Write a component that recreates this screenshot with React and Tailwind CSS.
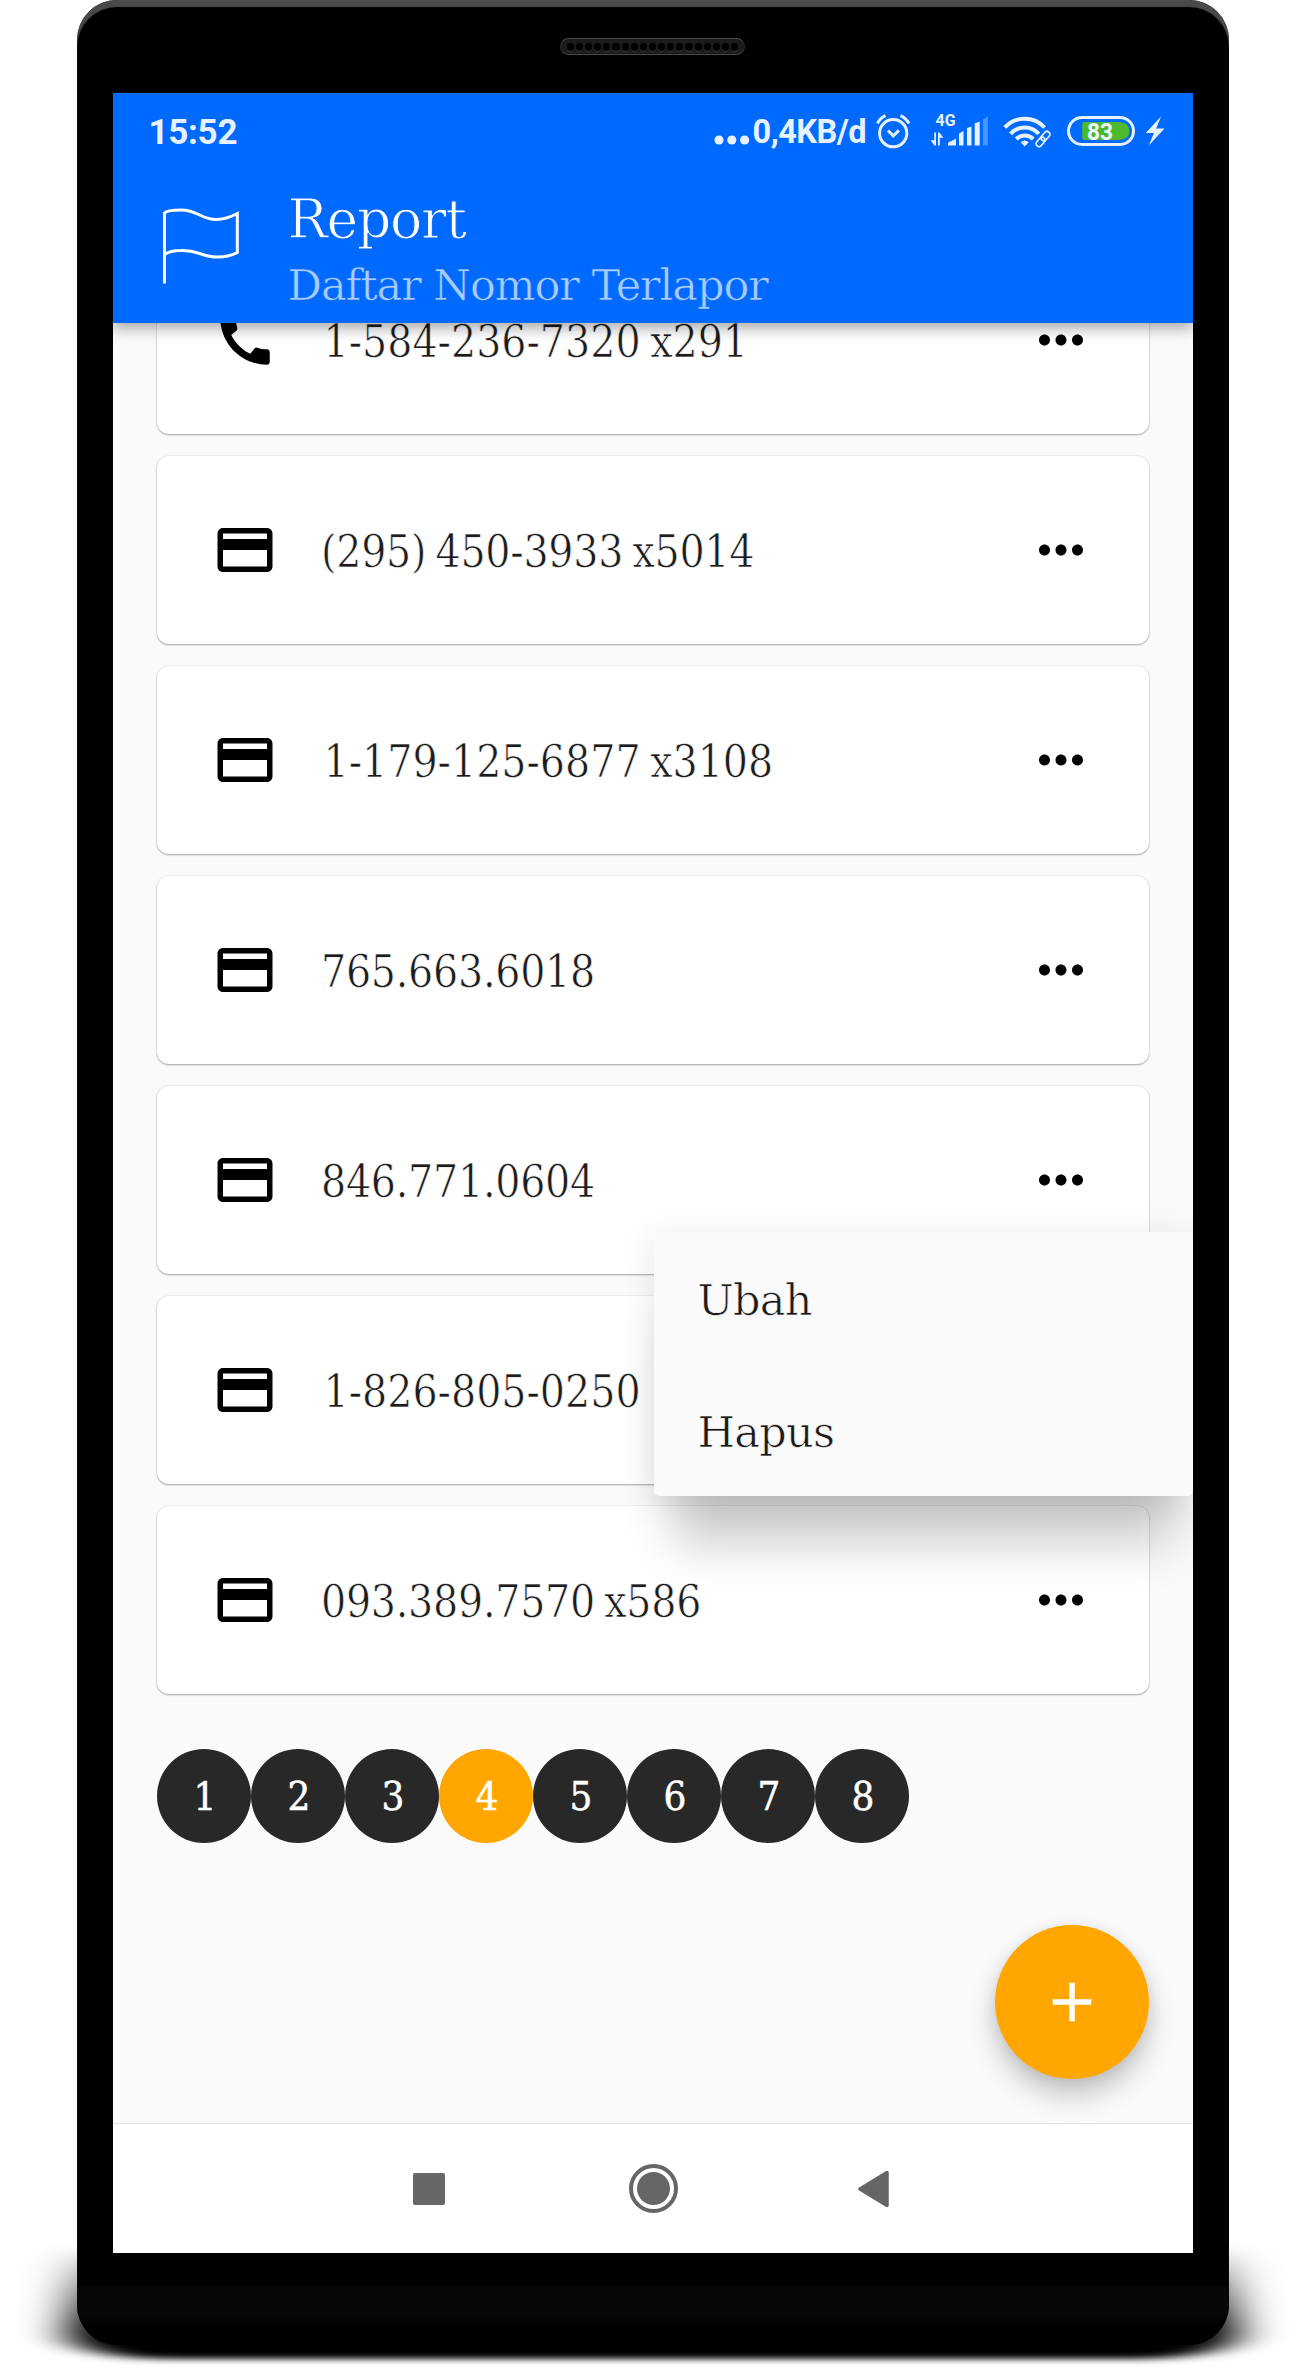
import React from "react";
import { MdAdd, MdCall, MdCreditCard, MdMoreHoriz } from "react-icons/md";

const entries = [
  { number: "1-584-236-7320 x291", kind: "phone" },
  { number: "(295) 450-3933 x5014", kind: "card" },
  { number: "1-179-125-6877 x3108", kind: "card" },
  { number: "765.663.6018", kind: "card" },
  { number: "846.771.0604", kind: "card" },
  { number: "1-826-805-0250", kind: "card" },
  { number: "093.389.7570 x586", kind: "card" },
];

const pages = [1, 2, 3, 4, 5, 6, 7, 8];
const holes = Array.from({ length: 19 }, (_, i) => i);

function DeviceShadow() {
  return (
    <svg className="absolute left-0 top-[2200px] h-[170px] w-[1305px]" viewBox="0 2200 1305 170" aria-hidden="true">
      <defs>
        <filter id="shade" filterUnits="userSpaceOnUse" x="-60" y="2140" width="1430" height="300">
          <feGaussianBlur stdDeviation="23 3.2" />
        </filter>
        <linearGradient id="rise" x1="0" y1="2245" x2="0" y2="2325" gradientUnits="userSpaceOnUse">
          <stop offset="0" stopColor="#000" stopOpacity="0" />
          <stop offset="1" stopColor="#000" stopOpacity="1" />
        </linearGradient>
      </defs>
      <path d="M72 2240 L68 2335 Q74 2354 150 2359 L1156 2359 Q1231 2354 1237 2335 L1233 2240Z" fill="url(#rise)" filter="url(#shade)" />
    </svg>
  );
}

function Speaker() {
  return (
    <div className="flex h-[17px] w-[185px] items-center justify-center gap-[2px] rounded-full border border-[#2e2e2e] border-t-[#4a4a4a] border-b-[#454545] bg-[#1b1b1b]">
      {holes.map((i) => (
        <span key={i} className="h-[8px] w-[7.15px] rounded-full bg-black shadow-[0_1px_0_#3c3c3c]" />
      ))}
    </div>
  );
}

function StatusBar() {
  return (
    <div className="flex h-[76px] items-center pl-[36px] font-['Roboto'] text-[#e8f1ff]">
      <span className="mt-[2px] w-[565px] text-[35px] font-bold leading-none tracking-[-0.3px]">15:52</span>
      <svg className="mt-[18px] h-[10px] w-[36px]" viewBox="0 0 36 10" fill="currentColor">
        <circle cx="5" cy="5" r="4.6" />
        <circle cx="17.8" cy="5" r="4.6" />
        <circle cx="30.6" cy="5" r="4.6" />
      </svg>
      <span className="ml-[3px] mt-[2px] w-[122px] whitespace-nowrap text-[32.5px] font-bold leading-none tracking-[-0.5px]">0,4KB/d</span>
      <svg className="h-[36px] w-[36px]" viewBox="0 0 36 36" fill="none" stroke="currentColor" strokeWidth="3">
        <circle cx="18.2" cy="20.2" r="13.6" />
        <path d="M13 17.5l5.2 5.3 5.7-5.5M2.5 10.5Q5 5 10.5 2.6M25.5 2.6Q31 5 34 10.5" />
      </svg>
      <svg className="ml-[19px] h-[36px] w-[60px]" viewBox="0 0 60 36" fill="currentColor">
        <text x="5.500" y="13" fontSize="16" fontWeight="700" fontFamily="Roboto" textLength="20" lengthAdjust="spacingAndGlyphs">4G</text>
        <path d="M4.3 19.500h1.700v13H4.500L.5 27.200h3.800zM8 19.500h1.500l3.800 5.200H9.800V32.500H8z" />
        <path d="M18 32.500v-2q0-1.500 3.500-2.500L26 25.500v7zM29 32.500V20.500l4.500-2.500V32.500zM37 32.500V15l4.500-1.500V32.500zM44.700 32.500V10.500l5-2V32.500z" />
        <path d="M53 32.500V6.500l4.800-3V32.500z" opacity=".32" />
      </svg>
      <svg className="-mt-[2px] ml-[13px] h-[36px] w-[49px]" viewBox="0 0 49 36" fill="none" stroke="currentColor">
        <g strokeWidth="4">
          <path d="M1.800 15.500A27 27 0 0 1 41.600 15.500M7.600 21.800A19 19 0 0 1 35.800 21.800M13.200 27A12 12 0 0 1 30.200 27" />
        </g>
        <path d="M21.700 34.500l-4-4.300q4-3.200 8 0z" fill="currentColor" stroke="none" />
        <g fill="none" transform="translate(40 27) rotate(40)">
          <rect x="-4.500" y="-10" width="9" height="20" rx="4.500" fill="#006aff" stroke="#006aff" strokeWidth="3" />
          <rect x="-2.900" y="-9" width="5.800" height="10.500" rx="2.900" strokeWidth="1.700" />
          <rect x="-2.900" y="-1.500" width="5.800" height="10.500" rx="2.900" strokeWidth="1.700" />
        </g>
      </svg>
      <svg className="ml-[15px] h-[30px] w-[68px]" viewBox="0 0 68 30">
        <rect x="1.500" y="1.500" width="65" height="27" rx="13.500" fill="none" stroke="currentColor" strokeWidth="3" />
        <path d="M17 6h36q9.500 1 9.500 9T53 24H17q-1.800 0-1.800-2V8q0-2 1.800-2z" fill="#4cb92f" />
        <text x="20" y="23.800" fontSize="24" fontWeight="700" fontFamily="Roboto" textLength="26" lengthAdjust="spacingAndGlyphs" fill="#f2f8ff">83</text>
      </svg>
      <svg className="ml-[10px] h-[30px] w-[20px]" viewBox="0 0 20 30" fill="currentColor">
        <path d="M16 .5L.7 17h8.200L3.800 29.500 19.500 12.600h-8.300z" />
      </svg>
    </div>
  );
}

function Header() {
  return (
    <header className="relative z-10 h-[230px] shrink-0 bg-[#006aff] shadow-[0_5px_14px_rgba(0,0,0,0.35)]">
      <StatusBar />
      <div className="mt-[14px] flex">
        <svg className="ml-[49px] mt-[25px] h-[78px] w-[80px]" viewBox="0 0 80 78" fill="none" stroke="#fff" strokeWidth="3">
          <path d="M2.500 75.500V5Q5 2 19 2C36 2 39 11.500 54 11.500Q64 11.500 75.300 5.500V44.500Q66 49 56 49C39 49 37 42 19 42.500Q8 42.500 2.500 46.500" />
        </svg>
        <div className="ml-[46px] font-['DejaVu_Serif',serif]">
          <h1 className="text-[53.5px] font-normal leading-[74px] tracking-[-1.2px] text-white [-webkit-text-stroke:1px_#006aff]">Report</h1>
          <p className="text-[43px] leading-[56px] tracking-[-1.05px] text-[#a9ccff] [-webkit-text-stroke:0.6px_#006aff]">Daftar Nomor Terlapor</p>
        </div>
      </div>
    </header>
  );
}

function EntryCard({ entry }) {
  const Icon = entry.kind === "phone" ? MdCall : MdCreditCard;
  const dashed = entry.number.startsWith("1-");
  return (
    <li className="flex h-[188px] shrink-0 items-center rounded-[12px] bg-white px-[55px] shadow-[0_1px_2px_rgba(0,0,0,0.32),0_0_2px_rgba(0,0,0,0.12)]">
      <Icon className="h-[66px] w-[66px] text-black" />
      <span
        className={
          (dashed ? "ml-[46px] tracking-[0px] " : "ml-[43.5px] tracking-[-0.25px] ") +
          "mt-[3px] flex-1 whitespace-nowrap font-['DejaVu_Serif_Condensed','DejaVu_Serif',serif] text-[44px] leading-[60px] text-[#1c1c1c] [font-stretch:condensed] [word-spacing:-3px] [-webkit-text-stroke:0.6px_#fff]"
        }
      >
        {entry.number}
      </span>
      <MdMoreHoriz className="h-[66px] w-[66px] text-black" />
    </li>
  );
}

function Menu() {
  return (
    <div className="absolute right-0 top-[1139px] z-20 flex h-[264px] w-[539px] flex-col rounded-[5px] bg-[#fafafa] font-['DejaVu_Serif',serif] text-[43px] text-[#1a1a1a] shadow-[0_68px_46px_-20px_rgba(0,0,0,0.2),0_6px_36px_rgba(0,0,0,0.1)]">
      <button className="h-[132px] px-[44px] pt-[4px] text-left tracking-[-0.7px] [-webkit-text-stroke:0.7px_#fafafa]">Ubah</button>
      <button className="h-[132px] px-[44px] pt-[4px] text-left tracking-[-0.7px] [-webkit-text-stroke:0.7px_#fafafa]">Hapus</button>
    </div>
  );
}

function NavBar() {
  return (
    <nav className="flex h-[130px] shrink-0 items-center border-t border-[#e0e0e0] bg-white pl-[300px]">
      <span className="h-[32px] w-[32px] rounded-[2px] bg-[#666]" />
      <span className="ml-[184px] flex h-[49px] w-[49px] items-center justify-center rounded-full border-4 border-[#666]">
        <span className="h-[33px] w-[33px] rounded-full bg-[#666]" />
      </span>
      <svg className="ml-[180px] h-[38px] w-[31px]" viewBox="0 0 31 38">
        <path d="M2 19L29 2.500v33z" fill="#666" stroke="#666" strokeWidth="3.500" strokeLinejoin="round" />
      </svg>
    </nav>
  );
}

export default function App() {
  return (
    <div className="relative h-[2370px] w-[1305px] overflow-hidden bg-white font-['DejaVu_Serif',serif]">
      <DeviceShadow />
      <div className="relative mx-auto flex h-[2345px] w-[1152px] flex-col items-center rounded-[40px] bg-black shadow-[inset_0_7px_1px_#4a4a4a]">
        <div className="flex h-[93px] shrink-0 items-center">
          <Speaker />
        </div>
        <main className="relative flex h-[2160px] w-[1080px] shrink-0 flex-col overflow-hidden bg-[#fafafa]">
          <Header />
          <section className="relative flex-1">
            <ul className="-mt-[77px] flex flex-col gap-[22px] px-[44px]">
              {entries.map((entry) => (
                <EntryCard key={entry.number} entry={entry} />
              ))}
            </ul>
            <div className="mt-[55px] flex px-[44px]">
              {pages.map((page) => (
                <button
                  key={page}
                  className={
                    (page === 4 ? "bg-[#ffa600] " : "bg-[#282828] ") +
                    "h-[94px] w-[94px] rounded-full pl-[3px] text-[40px] leading-none text-white [font-family:'DejaVu_Serif_Condensed','DejaVu_Serif',serif] [font-stretch:condensed] [-webkit-text-stroke:0.5px_#fff]"
                  }
                >
                  {page}
                </button>
              ))}
            </div>
            <button className="absolute bottom-[44px] right-[44px] flex h-[154px] w-[154px] items-center justify-center rounded-full bg-[#ffa600] shadow-[0_16px_28px_rgba(0,0,0,0.22),0_2px_14px_rgba(0,0,0,0.08)]">
              <MdAdd className="h-[66px] w-[66px] text-white" />
            </button>
          </section>
          <Menu />
          <NavBar />
        </main>
        <div className="mt-[34px] w-full flex-1 rounded-b-[40px] bg-linear-to-b from-[#070707] from-50% to-black to-85%" />
      </div>
    </div>
  );
}
